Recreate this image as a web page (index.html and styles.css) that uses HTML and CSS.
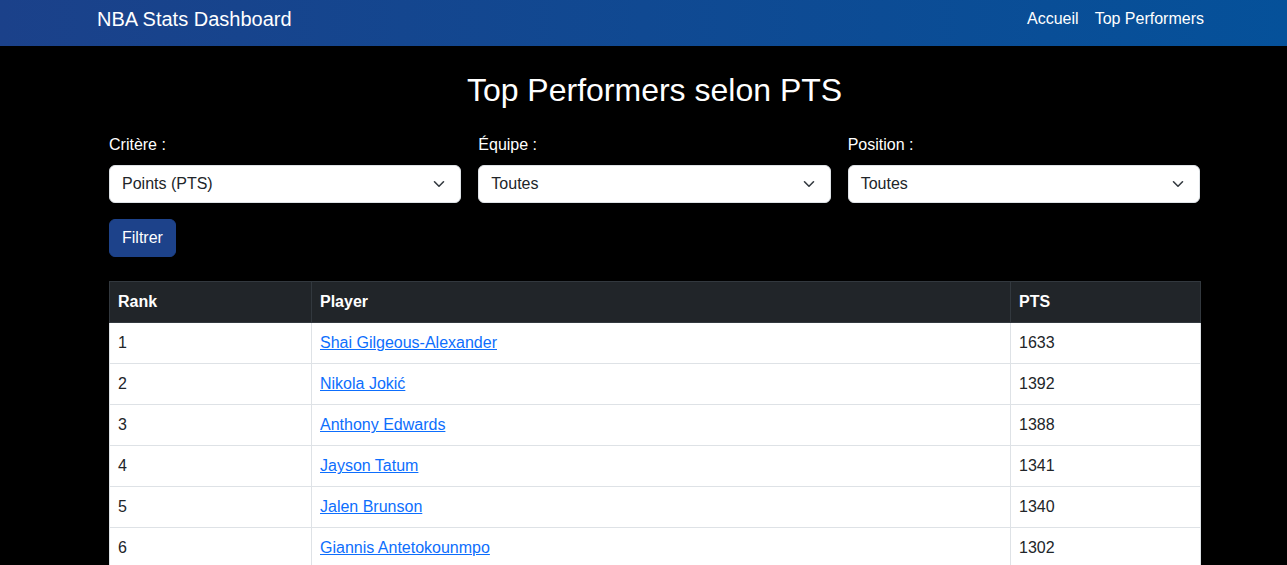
FILE: index.html
```html
<!DOCTYPE html>
<html lang="fr">
<head>
<meta charset="utf-8">
<title>NBA Stats Dashboard</title>
<link rel="stylesheet" href="styles.css">
</head>
<body>
<nav class="navbar">
  <div class="nav-inner">
    <a class="brand" href="#">NBA Stats Dashboard</a>
    <div class="nav-links">
      <a href="#">Accueil</a>
      <a href="#">Top Performers</a>
    </div>
  </div>
</nav>
<main class="main">
  <h1 class="title">Top Performers selon PTS</h1>
  <form class="filters">
    <div class="field">
      <label>Critère :</label>
      <div class="select"><span>Points (PTS)</span><svg width="12" height="8" viewBox="0 0 12 8"><path d="M1.5 1.8 L6 6.2 L10.5 1.8" fill="none" stroke="#343a40" stroke-width="1.6" stroke-linecap="round" stroke-linejoin="round"/></svg></div>
    </div>
    <div class="field">
      <label>Équipe :</label>
      <div class="select"><span>Toutes</span><svg width="12" height="8" viewBox="0 0 12 8"><path d="M1.5 1.8 L6 6.2 L10.5 1.8" fill="none" stroke="#343a40" stroke-width="1.6" stroke-linecap="round" stroke-linejoin="round"/></svg></div>
    </div>
    <div class="field">
      <label>Position :</label>
      <div class="select"><span>Toutes</span><svg width="12" height="8" viewBox="0 0 12 8"><path d="M1.5 1.8 L6 6.2 L10.5 1.8" fill="none" stroke="#343a40" stroke-width="1.6" stroke-linecap="round" stroke-linejoin="round"/></svg></div>
    </div>
  </form>
  <button class="btn" type="button">Filtrer</button>
  <table class="table">
    <thead>
      <tr><th class="c-rank">Rank</th><th class="c-player">Player</th><th class="c-pts">PTS</th></tr>
    </thead>
    <tbody>
      <tr><td>1</td><td><a href="#">Shai Gilgeous-Alexander</a></td><td>1633</td></tr>
      <tr><td>2</td><td><a href="#">Nikola Jokić</a></td><td>1392</td></tr>
      <tr><td>3</td><td><a href="#">Anthony Edwards</a></td><td>1388</td></tr>
      <tr><td>4</td><td><a href="#">Jayson Tatum</a></td><td>1341</td></tr>
      <tr><td>5</td><td><a href="#">Jalen Brunson</a></td><td>1340</td></tr>
      <tr><td>6</td><td><a href="#">Giannis Antetokounmpo</a></td><td>1302</td></tr>
    </tbody>
  </table>
</main>
</body>
</html>
```

FILE: styles.css
```css
* { box-sizing: border-box; }
html, body { margin: 0; padding: 0; }
body {
  background: #000;
  color: #fff;
  font-family: "Liberation Sans", Arial, sans-serif;
  font-size: 16px;
  line-height: 1.5;
}
.navbar {
  height: 46px;
  background: linear-gradient(90deg, #1b418a 0%, #05519a 100%);
}
.nav-inner {
  display: flex;
  justify-content: space-between;
  align-items: center;
  height: 38px;
  padding: 0 83px 0 97px;
}
.brand {
  color: #fff;
  text-decoration: none;
  font-size: 20px;
}
.nav-links {
  display: flex;
  gap: 16px;
}
.nav-links a {
  color: #fff;
  text-decoration: none;
  font-size: 16px;
}
.main {
  width: 1091px;
  margin-left: 109px;
  padding-top: 25px;
}
.title {
  margin: 0 0 24px;
  text-align: center;
  font-weight: 400;
  font-size: 32px;
  line-height: 1.2;
}
.filters {
  display: grid;
  grid-template-columns: repeat(3, 1fr);
  gap: 17px;
}
.field label {
  display: block;
  margin-bottom: 8px;
  line-height: 24px;
}
.select {
  display: flex;
  justify-content: space-between;
  align-items: center;
  height: 38px;
  padding: 0 15px 0 12px;
  background: #fff;
  color: #212529;
  border: 1px solid #dee2e6;
  border-radius: 6px;
}
.btn {
  display: block;
  margin-top: 16px;
  height: 38px;
  padding: 0 12px;
  background: #1d428a;
  color: #fff;
  border: 1px solid #1d428a;
  border-radius: 6px;
  font: inherit;
}
.table {
  width: 1092px;
  margin-top: 24px;
  border-collapse: collapse;
  color: #212529;
  background: #fff;
}
.table th, .table td {
  text-align: left;
  padding: 8px;
  height: 41px;
  border: 1px solid #dee2e6;
}
.table thead th {
  background: #212529;
  color: #fff;
  border-color: #32383e;
  font-weight: 700;
}
.c-rank { width: 202px; }
.c-player { width: 699px; }
.table a { color: #0d6efd; text-decoration: underline; }
```
